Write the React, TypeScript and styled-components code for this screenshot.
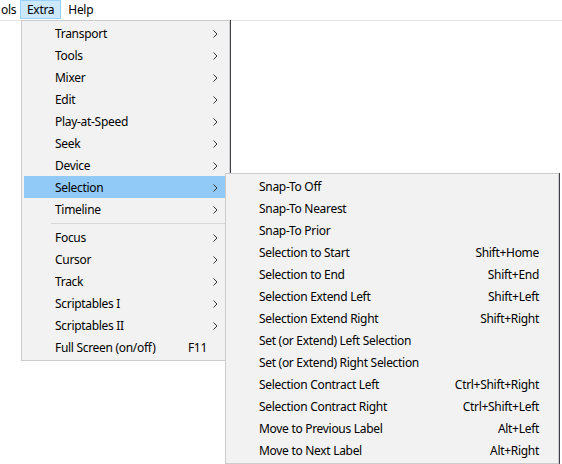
import React from "react";
import styled, { createGlobalStyle } from "styled-components";

const Global = createGlobalStyle`
  html, body { margin: 0; padding: 0; background: #ffffff; }
  body {
    font-family: "Noto Sans", "Open Sans", sans-serif;
    font-size: 12px;
    letter-spacing: -0.3px;
    color: #000;
    overflow: hidden;
  }
`;

const Page = styled.div`
  position: relative;
  width: 562px;
  height: 464px;
  overflow: hidden;
  background: #fff;
`;

const MenuBar = styled.div`
  display: flex;
  height: 20px;
  align-items: stretch;
  background: #fff;
  overflow: hidden;
`;

const BarItem = styled.div<{ $active?: boolean; $w?: number }>`
  flex: none;
  display: flex;
  align-items: center;
  justify-content: ${(p) => (p.$w ? "flex-start" : "center")};
  padding: 0 ${(p) => (p.$w ? 0 : 6)}px 0;
  width: ${(p) => (p.$w ? `${p.$w}px` : "auto")};
  box-sizing: border-box;
  height: 19px;
  border: 1px solid ${(p) => (p.$active ? "#99d1ff" : "transparent")};
  background: ${(p) => (p.$active ? "#cce8ff" : "transparent")};
  line-height: 1;
`;

const Workspace = styled.div`
  height: 444px;
  border-top: 1px solid #e3e3e3;
  background: #fff;
`;

const Menu = styled.div<{ $x: number; $y: number; $w: number }>`
  position: absolute;
  left: ${(p) => p.$x}px;
  top: ${(p) => p.$y}px;
  width: ${(p) => p.$w}px;
  box-sizing: border-box;
  background: #f2f2f2;
  border: 1px solid #cccccc;
  padding: 1px 2px 2px 2px;
  box-shadow: 1px 0 0 0 #3f4048;
  display: flex;
  flex-direction: column;
`;

const Item = styled.div<{ $hot?: boolean }>`
  display: grid;
  grid-template-columns: 1fr auto 20px;
  align-items: center;
  height: 22px;
  padding-left: 31px;
  padding-top: 1px;
  background: ${(p) => (p.$hot ? "#91c9f7" : "transparent")};
  white-space: nowrap;
  line-height: 1;
  box-sizing: border-box;
`;

const SubItem = styled(Item)`
  grid-template-columns: 1fr auto 17px;
`;

const Label = styled.span``;

const Shortcut = styled.span`
  text-align: right;
`;

const ArrowCell = styled.span`
  display: flex;
  align-items: center;
  justify-content: flex-start;
  padding-left: 6px;
`;

const Separator = styled.div`
  height: 6px;
  display: flex;
  align-items: center;
  padding-left: 27px;
  &::after {
    content: "";
    flex: 1;
    height: 1px;
    background: #d7d7d7;
  }
`;

const Chevron = () => (
  <svg width="5" height="8" viewBox="0 0 5 8">
    <polyline points="0.5,0.5 4,4 0.5,7.5" fill="none" stroke="#333" strokeWidth="1" />
  </svg>
);

type Entry = { label: string; sub?: boolean; key?: string; hot?: boolean } | "sep";

const mainEntries: Entry[] = [
  { label: "Transport", sub: true },
  { label: "Tools", sub: true },
  { label: "Mixer", sub: true },
  { label: "Edit", sub: true },
  { label: "Play-at-Speed", sub: true },
  { label: "Seek", sub: true },
  { label: "Device", sub: true },
  { label: "Selection", sub: true, hot: true },
  { label: "Timeline", sub: true },
  "sep",
  { label: "Focus", sub: true },
  { label: "Cursor", sub: true },
  { label: "Track", sub: true },
  { label: "Scriptables I", sub: true },
  { label: "Scriptables II", sub: true },
  { label: "Full Screen (on/off)", key: "F11" },
];

const subEntries: { label: string; key?: string }[] = [
  { label: "Snap-To Off" },
  { label: "Snap-To Nearest" },
  { label: "Snap-To Prior" },
  { label: "Selection to Start", key: "Shift+Home" },
  { label: "Selection to End", key: "Shift+End" },
  { label: "Selection Extend Left", key: "Shift+Left" },
  { label: "Selection Extend Right", key: "Shift+Right" },
  { label: "Set (or Extend) Left Selection" },
  { label: "Set (or Extend) Right Selection" },
  { label: "Selection Contract Left", key: "Ctrl+Shift+Right" },
  { label: "Selection Contract Right", key: "Ctrl+Shift+Left" },
  { label: "Move to Previous Label", key: "Alt+Left" },
  { label: "Move to Next Label", key: "Alt+Right" },
];

export default function App() {
  return (
    <Page>
      <Global />
      <MenuBar>
        <BarItem $w={20}>ols</BarItem>
        <BarItem $active>Extra</BarItem>
        <BarItem>Help</BarItem>
      </MenuBar>
      <Workspace />
      <Menu $x={21} $y={20} $w={209}>
        {mainEntries.map((e, i) =>
          e === "sep" ? (
            <Separator key={i} />
          ) : (
            <Item key={i} $hot={e.hot}>
              <Label>{e.label}</Label>
              <Shortcut>{e.key ?? ""}</Shortcut>
              <ArrowCell>{e.sub ? <Chevron /> : null}</ArrowCell>
            </Item>
          )
        )}
      </Menu>
      <Menu $x={225} $y={173} $w={334}>
        {subEntries.map((e, i) => (
          <SubItem key={i}>
            <Label>{e.label}</Label>
            <Shortcut>{e.key ?? ""}</Shortcut>
            <ArrowCell />
          </SubItem>
        ))}
      </Menu>
    </Page>
  );
}
